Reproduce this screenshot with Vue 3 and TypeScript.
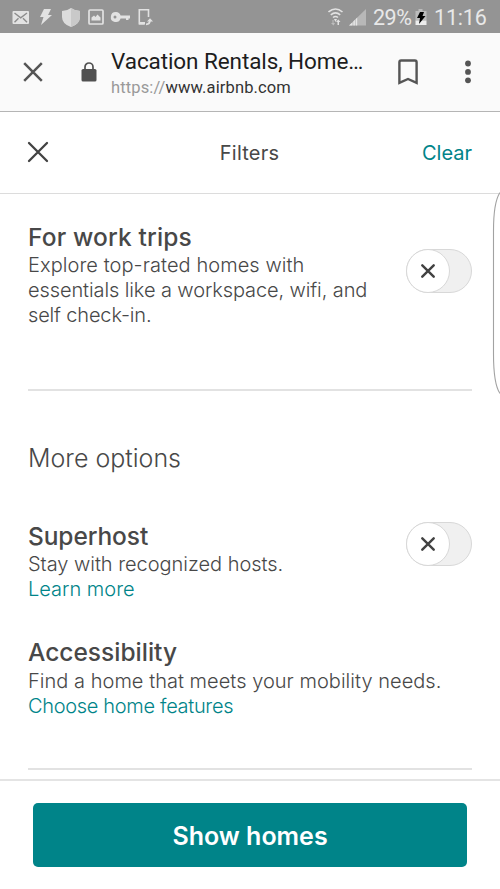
<script setup lang="ts">
interface Option {
  id: string
  title: string
  lines: string[]
  link?: string
  toggle: boolean
}

const workTrips: Option = {
  id: 'trips',
  title: 'For work trips',
  lines: ['Explore top-rated homes with', 'essentials like a workspace, wifi, and', 'self check-in.'],
  toggle: true,
}

const moreOptions: Option[] = [
  { id: 'superhost', title: 'Superhost', lines: ['Stay with recognized hosts.'], link: 'Learn more', toggle: true },
  {
    id: 'access',
    title: 'Accessibility',
    lines: ['Find a home that meets your mobility needs.'],
    link: 'Choose home features',
    toggle: false,
  },
]
</script>

<template>
  <div class="screen">
    <header class="status">
      <svg class="status-icons" width="170" height="33" viewBox="0 0 170 33">
        <rect x="12.500" y="11" width="16.500" height="13" rx="1" fill="#e2e2e2" />
        <path d="M14.500 13l6.200 4.800L27 13M14.500 22.300l4-4M27 22.300l-4-4" fill="none" stroke="#8c8c8c" stroke-width="1.400" />
        <path d="M44 9h7l-3 6h4L41 25l2.500-8H40z" fill="#e2e2e2" />
        <path d="M71 8q4 3 9 3v6q0 7-9 10q-9-3-9-10v-6q5 0 9-3z" fill="#dcdcdc" />
        <path d="M71 8q4 3 9 3v6q0 7-9 10z" fill="#c9c9c9" />
        <rect x="89" y="10" width="14" height="14" rx="1" fill="none" stroke="#e2e2e2" stroke-width="1.700" />
        <path d="M91.500 20.500v-3l2.500-2 1.500 1.500 2-2.500 3 3v3z" fill="#e2e2e2" />
        <path fill-rule="evenodd" d="M116 12a5 5 0 0 1 4.600 3.500H130v3h-1.500V20H126v-1.500h-5.400A5 5 0 1 1 116 12zm-1 3.600a1.500 1.500 0 1 0 0 3 1.500 1.500 0 0 0 0-3z" fill="#e2e2e2" />
        <path d="M148.500 17v-7.200h-9.200v14h5" fill="none" stroke="#e2e2e2" stroke-width="1.600" />
        <path d="M139 22h6v2.500h-6z" fill="#e2e2e2" />
        <path d="M146 24.300q4 0 4-4" fill="none" stroke="#e2e2e2" stroke-width="1.800" />
        <path d="M147 21.500l3-3.300 3 3.300z" fill="#e2e2e2" />
      </svg>
      <div class="status-right">
        <svg width="40" height="33" viewBox="328 0 40 33">
          <g fill="none" stroke="#e2e2e2" stroke-width="1.600">
            <path d="M328.500 12q7-6 14 0" />
            <path d="M330.800 14.800q4.700-4 9.400 0" />
            <path d="M333 17.500q2.500-2 5 0" />
          </g>
          <path d="M334 19h3l-1.500 3z" fill="#e2e2e2" />
          <path d="M332.500 20v3h-1.500l2.500 2.500 1.500-2.500h-1.500v-3z" fill="#bdbdbd" />
          <path d="M337.500 25v-3h-1.500l2.300-2.500 2.200 2.500H339v3z" fill="#e2e2e2" />
          <path d="M349 25.500L366 9v16.500z" fill="#b8b8b8" />
          <path d="M349 25.500l3.500-3.300v3.300zM353.300 25.500v-4l1.600-1.700v5.700zM355.700 25.500v-6.300l1.500-1.700v8z" fill="#e6e6e6" />
        </svg>
        <span class="battery-text">29%</span>
        <svg class="battery" width="12" height="33" viewBox="415 0 12 33">
          <path d="M418.500 9h4v2h4v9.500h-11V11h3z" fill="#bcbcbc" />
          <path d="M415.500 20.500h11V25h-11z" fill="#ededed" />
          <path d="M420 12h4l-1.500 4h3l-6.500 8 1-6H417z" fill="#000" />
        </svg>
        <span class="clock">11:16</span>
      </div>
    </header>

    <div class="browser">
      <svg class="tab-close" width="20" height="20" viewBox="0 0 20 20">
        <path d="M1.200 1.200l17.600 17.600M18.800 1.200L1.200 18.800" stroke="#555" stroke-width="2.500" />
      </svg>
      <svg class="lock" width="16" height="20" viewBox="0 0 16 20">
        <rect x="0.500" y="7" width="15" height="12.500" rx="1.600" fill="#505050" />
        <path d="M4 8V5a4 4 0 0 1 8 0v3" fill="none" stroke="#505050" stroke-width="1.700" />
      </svg>
      <div class="address">
        <div class="page-title">Vacation Rentals, Home…</div>
        <div class="url"><span class="scheme">https://</span>www.airbnb.com</div>
      </div>
      <svg class="bookmark" width="20" height="26" viewBox="0 0 20 26">
        <path d="M1.400 23.800V3.200q0-1.700 1.700-1.700h13.800q1.700 0 1.700 1.700v20.600L10 20z" fill="none" stroke="#555" stroke-width="2.400" />
      </svg>
      <svg class="menu" width="6" height="24" viewBox="0 0 6 24">
        <circle v-for="y in [3.500, 11.900, 20.300]" :key="y" cx="3" :cy="y" r="2.900" fill="#555" />
      </svg>
    </div>

    <div class="filter-head">
      <svg width="22" height="22" viewBox="0 0 22 22">
        <path d="M2 2l18 18M20 2L2 20" stroke="#424242" stroke-width="2.300" stroke-linecap="round" />
      </svg>
      <h1>Filters</h1>
      <a class="clear">Clear</a>
    </div>

    <main>
      <section class="option work">
        <div>
          <h2 :class="workTrips.id">{{ workTrips.title }}</h2>
          <p v-for="(line, i) in workTrips.lines" :key="line" :class="'trips-line' + i">{{ line }}</p>
        </div>
        <div class="toggle">
          <div class="knob">
            <svg width="14" height="14" viewBox="0 0 14 14"><path d="M1.300 1.300l11.400 11.400M12.700 1.300L1.300 12.700" stroke="#424242" stroke-width="2.400" stroke-linecap="round" /></svg>
          </div>
        </div>
      </section>

      <h3>More options</h3>

      <section v-for="o in moreOptions" :key="o.id" class="option" :class="o.id + '-row'">
        <div>
          <h2 :class="o.id">{{ o.title }}</h2>
          <p v-for="line in o.lines" :key="line" :class="o.id + '-line'">{{ line }}</p>
          <a v-if="o.link" :class="o.id + '-link'">{{ o.link }}</a>
        </div>
        <div v-if="o.toggle" class="toggle">
          <div class="knob">
            <svg width="14" height="14" viewBox="0 0 14 14"><path d="M1.300 1.300l11.400 11.400M12.700 1.300L1.300 12.700" stroke="#424242" stroke-width="2.400" stroke-linecap="round" /></svg>
          </div>
        </div>
      </section>
    </main>

    <footer>
      <button type="button">Show homes</button>
    </footer>

    <svg class="edge-handle" width="8" height="206" viewBox="0 0 8 206">
      <path d="M8 1.500C3.500 8 1.500 20 1.500 40V163c0 20 2 33 6.500 39.500" fill="#fff" stroke="#a2a2a2" stroke-width="1.100" />
    </svg>
  </div>
</template>

<style>
body {
  background: #fff;
}
</style>

<style scoped>
* {
  box-sizing: border-box;
}
.screen {
  position: relative;
  display: flex;
  flex-direction: column;
  width: 500px;
  height: 889px;
  overflow: hidden;
  background: #fff;
  color: #484848;
  font-family: Inter, "Liberation Sans", sans-serif;
}
h1, h2, h3, p {
  margin: 0;
  white-space: nowrap;
}
.status {
  display: flex;
  justify-content: space-between;
  height: 33px;
  background: #949494;
  color: #e8e8e8;
  font: 21.500px/36px Roboto, sans-serif;
}
.status-right {
  display: flex;
  padding-right: 13px;
}
.battery-text {
  margin-left: 5px;
  width: 39px;
  letter-spacing: -0.500px;
}
.battery {
  margin: 0 7px 0 3px;
}
.clock {
  width: 53px;
  letter-spacing: -0.200px;
}
.browser {
  display: flex;
  align-items: center;
  height: 79px;
  padding: 0 29px 0 23px;
  background: #fafafa;
  border-bottom: 1px solid #b5b5b5;
  font-family: Roboto, sans-serif;
}
.lock {
  margin-left: 38px;
}
.address {
  width: 270px;
  margin-left: 14px;
  padding-top: 4px;
}
.page-title {
  color: #1d1d1d;
  font-size: 22.500px;
  line-height: 27px;
  letter-spacing: -0.090px;
  white-space: nowrap;
}
.url {
  color: #333;
  font-size: 16.500px;
  line-height: 25px;
  letter-spacing: 0.130px;
}
.scheme {
  color: #999;
}
.bookmark {
  margin-left: 17px;
}
.menu {
  margin-left: auto;
}
.filter-head {
  display: grid;
  grid-template-columns: 1fr auto 1fr;
  align-items: center;
  height: 82px;
  padding: 0 28px 1px 27px;
  border-bottom: 1px solid #dcdcdc;
}
h1 {
  padding-top: 2px;
  font-size: 20px;
  font-weight: 400;
  letter-spacing: 0.200px;
}
.clear {
  justify-self: end;
  padding-top: 2px;
  color: #008489;
  font-size: 20px;
}
main {
  flex: 1;
  margin: 0 28px;
}
.option {
  display: flex;
  justify-content: space-between;
}
.work {
  height: 197px;
  padding-top: 28px;
  border-bottom: 2px solid #e2e2e2;
}
h2 {
  font-size: 24.500px;
  line-height: 30px;
  font-weight: 500;
}
.trips {
  letter-spacing: 0.150px;
}
.superhost {
  letter-spacing: -0.100px;
}
h2 + p {
  margin-top: 1px;
}
p, .option a {
  display: block;
  font-size: 20px;
  line-height: 25px;
  font-weight: 300;
}
.trips-line0 {
  letter-spacing: 0.070px;
}
.trips-line1 {
  letter-spacing: -0.100px;
}
.trips-line2 {
  letter-spacing: -0.160px;
}
.superhost-line {
  letter-spacing: -0.030px;
}
h2 + .access-line {
  margin-top: 2px;
  letter-spacing: 0.030px;
}
.option a {
  color: #008489;
}
.option .access-link {
  letter-spacing: -0.320px;
}
h3 {
  margin-top: 51px;
  font-size: 25px;
  line-height: 32px;
  font-weight: 300;
}
.toggle {
  flex: none;
  width: 66px;
  height: 44px;
  margin-top: 27px;
  border: 1px solid #d8d8d8;
  border-radius: 22px;
  background: #f0f0f0;
}
.knob {
  display: flex;
  align-items: center;
  justify-content: center;
  width: 44px;
  height: 44px;
  margin: -1px;
  border: 1px solid #d8d8d8;
  border-radius: 50%;
  background: #fff;
}
.superhost-row {
  margin-top: 47px;
}
.superhost-row .toggle {
  margin-top: 1px;
}
.access-row {
  height: 133px;
  margin-top: 35px;
  border-bottom: 2px solid #e2e2e2;
}
footer {
  height: 110px;
  padding: 22px 33px;
  border-top: 2px solid #e4e4e4;
}
button {
  display: block;
  width: 434px;
  height: 64px;
  padding: 2px 0 0;
  border: 0;
  border-radius: 5px;
  background: #008489;
  color: #fff;
  font: 600 25px Inter, sans-serif;
}
.edge-handle {
  position: absolute;
  right: 0;
  top: 191px;
}
</style>
